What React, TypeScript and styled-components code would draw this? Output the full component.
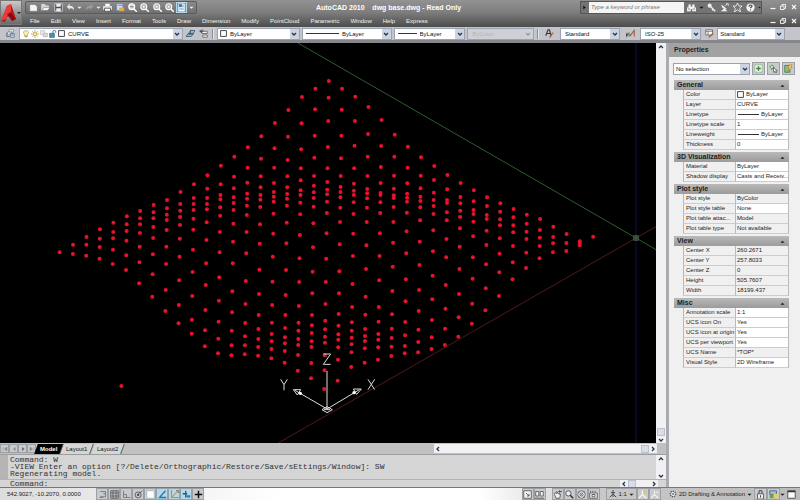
import React from "react";
import styled, { createGlobalStyle } from "styled-components";

const Global = createGlobalStyle`
  * { box-sizing: border-box; }
  html, body, #root { height: 100%; }
  body { margin: 0; overflow: hidden; background: #a5a8ae; font: 6px/10px "Liberation Sans", Arial, sans-serif; color: #1c1c1c; }
  button, input, select { font: inherit; color: inherit; margin: 0; padding: 0; border: 0; background: none; border-radius: 0; outline: none; }
`;

/* ---------- icons ---------- */

const art: Record<string, React.ReactNode> = {
  newFile: <path d="M1 2h7l3 3v6H1z" fill="#f4f4f4" stroke="#555" strokeWidth=".5" />,
  open: <><path d="M1 10V2h4l1 2h4v2" fill="#cfcfcf" stroke="#eee" /><path d="M1 10l3-4h8l-3 4z" fill="#f2f2f2" stroke="#555" strokeWidth=".5" /></>,
  save: <><path d="M1 1h10v10H1z" fill="#46505e" stroke="#ddd" /><path d="M3 1h6v4H3zM3 7h6v4H3z" fill="#eee" /></>,
  undo: <path d="M1 5l4-4v3c5-1 6 3 5 6-1-3-2-3-5-3v2z" fill="#e4e8ee" />,
  redo: <path d="M11 5L7 1v3C2 3 1 7 2 10c1-3 2-3 5-3v2z" fill="#9b9b9b" />,
  print: <><path d="M3 1h6v4H3z" fill="#fff" /><path d="M0 4h12v5H0z" fill="#dcdcdc" /><path d="M2 7h8v4H2z" fill="#fff" stroke="#444" /></>,
  plot: <><path d="M1 1h8v9H1z" fill="#d9e4f3" stroke="#7189a8" /><path d="M4 6h7v5H4z" fill="#e6a54b" /><path d="M3 3h5" stroke="#4169a0" /></>,
  zoom: <><circle cx="5" cy="5" r="4" fill="#dedede" stroke="#fff" strokeWidth="1.4" /><path d="M8 8l4 4" stroke="#fff" strokeWidth="2" /><path d="M3 5h4" stroke="#444" /></>,
  zoomPlus: <><circle cx="5" cy="5" r="4" fill="#aaa" stroke="#fff" strokeWidth="1.4" /><path d="M8 8l4 4" stroke="#fff" strokeWidth="2" /><path d="M3 5h4M5 3v4" stroke="#fff" /></>,
  palette: <><path d="M1 0h10v12H1z" fill="#f5faff" stroke="#30679c" /><path d="M3 2h3v3H3zM3 8h6" fill="#356fa8" stroke="#356fa8" /><path d="M8 2v4" stroke="#356fa8" /></>,
  layers: <><path d="M4 1h6v3H4zM2 4h6v3H2z" fill="#f5f7fa" stroke="#677788" strokeWidth=".8" /><path d="M6 6h5v5H6z" fill="#dce4ed" stroke="#567" /><path d="M1 5v5h4M7 8h3" stroke="#456" fill="none" /></>,
  bulb: <><path d="M6 1c-5 0-4 4-2 6v2h4V7c2-2 3-6-2-6z" fill="#fff3a0" stroke="#98832c" strokeWidth=".8" /><path d="M4 10h4" stroke="#555" /></>,
  sun: <><circle cx="6" cy="6" r="3" fill="#ffe98b" stroke="#a1822b" /><path d="M6 0v2M6 10v2M0 6h2M10 6h2M2 2l1 1M9 9l1 1M2 10l1-1M9 3l1-1" stroke="#a1822b" /></>,
  freeze: <><path d="M1 1h6v6H1z" fill="#eee" stroke="#b7b7b7" /><path d="M5 5h6v5H5z" fill="#ddd" stroke="#aaa" /></>,
  lock: <><path d="M1 5h7v6H1z" fill="#4e91ac" stroke="#286078" /><path d="M6 5V2c0-2 4-2 4 0v2" fill="none" stroke="#286078" strokeWidth="1.3" /></>,
  square: <path d="M1 1h10v10H1z" fill="#fff" stroke="#222" strokeWidth="1.4" />,
  layerBlue: <><path d="M3 7l3-5h6L9 7zM0 10l3-4h7l-3 4z" fill="#9bb9ce" stroke="#34526a" /><path d="M6 1v5" stroke="#34526a" /></>,
  layerPrev: <><path d="M4 3h7v3H4zM5 8h6v3H5z" fill="#f1f1f1" stroke="#555" /><path d="M5 1L1 3l3 2M1 3h5" fill="none" stroke="#333" /></>,
  textStyle: <><path d="M1 9l3-8h2l2 8M2 6h5" fill="none" stroke="#333" strokeWidth="1.4" /><path d="M6 11c2 0 1-3 5-6" stroke="#b3603b" strokeWidth="2" fill="none" /></>,
  dimStyle: <><path d="M0 8h7M1 5v6M0 8l5-3" stroke="#333" fill="none" /><path d="M4 10c2 0 3-4 7-8v8" stroke="#a5633d" strokeWidth="1.6" fill="none" /></>,
  tableStyle: <><path d="M1 1h9v7H1zM1 3h9M4 3v5" fill="#fff" stroke="#555" /><path d="M5 11c2 0 2-3 6-5" stroke="#b8652e" strokeWidth="2" fill="none" /></>,
  binoculars: <><path d="M2 2h3v4H2zM7 2h3v4H7zM0 6h5v5H0zM7 6h5v5H7zM5 5h2v3H5z" fill="#f6f6f6" /><path d="M1 8h3M8 8h3" stroke="#666" /></>,
  key: <><circle cx="3.5" cy="3.5" r="2.7" fill="#eee" /><path d="M5 5l6 6M8 8l-1 2" stroke="#eee" strokeWidth="2" /></>,
  dish: <><path d="M2 2c0 5 3 6 7 6zM1 11h9L6 7z" fill="#f2f2f2" /><path d="M6 4l4-3M8 1h3v3" stroke="#f2f2f2" fill="none" /></>,
  star: <path d="M6 0l2 4h4L9 7l1 5-4-3-4 3 1-5-3-3h4z" fill="#777" stroke="#fff" />,
  help: <><circle cx="6" cy="6" r="5.5" fill="#f5f5f5" /><path d="M4 5c0-3 4-3 4-1 0 2-2 1-2 3M6 8.500v1.400" fill="none" stroke="#444" strokeWidth="1.5" /></>,
  minimise: <path d="M1 9h10" stroke="#f5f5f5" strokeWidth="2.400" />,
  restore: <path d="M4 4V1h7v8H8M1 4h7v7H1z" fill="none" stroke="#f5f5f5" strokeWidth="1.8" />,
  close: <path d="M2 2l8 8M10 2l-8 8" stroke="#f5f5f5" strokeWidth="2.400" />,
  pick: <><path d="M1 1h10v10H1z" fill="#e3f1df" stroke="#80a67c" strokeDasharray="2 1" /><path d="M6 3v6M3 6h6" stroke="#3e8742" strokeWidth="1.8" /></>,
  select: <><path d="M1 4l3-3 3 3-3 3zM3 8l3-3 3 3" fill="#bfe0b8" stroke="#3e8345" /><path d="M6 5l5 4H9l1 3-1 .4L8 10l-2 1z" fill="#fff" stroke="#333" strokeWidth=".8" /></>,
  quick: <><path d="M1 2h7v9H1z" fill="#8fc185" stroke="#397340" /><path d="M8 0L5 5h2l-2 5 6-6H9l2-4z" fill="#ffd16b" stroke="#9d6b20" strokeWidth=".7" /></>,
  snap: <path d="M3 2h7v7H3M10 5H7M2 10h5" fill="none" stroke="#777" strokeWidth="1.2" />,
  grid: <path d="M1 1h10v10H1zM1 4h10M1 8h10M4 1v10M8 1v10" fill="none" stroke="#454545" />,
  ortho: <path d="M2 1v9h9M2 6h4v4" fill="none" stroke="#777" strokeWidth="1.2" />,
  polar: <><circle cx="5.500" cy="6.500" r="4" fill="none" stroke="#444" /><circle cx="5.500" cy="6.500" r="1.500" fill="#444" /><path d="M5 6l6-5" stroke="#444" /></>,
  osnap: <path d="M1 1h10v10H1z" fill="#fff" stroke="#aaa" />,
  angle: <path d="M10 1L2 10h9" fill="none" stroke="#2476ac" strokeWidth="1.800" />,
  ducs: <><path d="M2 0v10h10M2 10l7-7" fill="none" stroke="#c98c35" strokeWidth="1.400" /><path d="M8 1h3v3" fill="none" stroke="#444" /></>,
  dyn: <><path d="M5 1v9M1 5h6" stroke="#1d6189" strokeWidth="1.700" /><path d="M6 7h5v3H6z" fill="#2c7ca8" /></>,
  plus: <path d="M6 1v10M1 6h10" stroke="#111" strokeWidth="2" />,
  model: <path d="M1 1h10v10H1zM4 4l4 4M8 5v3H5" fill="#f5f5f5" stroke="#444" />,
  views: <path d="M1 2h4v6H1zM7 2h4v6H7zM0 11h12" fill="#f5f5f5" stroke="#444" />,
  pan: <><path d="M2 6c-2-2 2-3 3-1V2l2 3 3 1-1 5H4z" fill="#eee" stroke="#444" /><path d="M9 0v5M7 2h5" stroke="#444" /></>,
  lens: <><circle cx="4.500" cy="4.500" r="3.500" fill="#eee" stroke="#333" /><path d="M7 7l4 4" stroke="#333" strokeWidth="2" /></>,
  wheel: <><circle cx="6" cy="6" r="5" fill="#eee" stroke="#444" /><circle cx="6" cy="6" r="2" fill="none" stroke="#444" /><path d="M2 2l8 8M10 2l-8 8" stroke="#666" strokeWidth=".6" /></>,
  motion: <path d="M1 4h10v7H1zM2 1v2M5 1v2M8 1v2M4 6h4v3H4z" fill="#eee" stroke="#444" />,
  scale: <path d="M6 0v6M6 6l-5 5M6 6l5 5M3 4h6M4 9h4" fill="none" stroke="#3c3c3c" strokeWidth="1.300" />,
  scaleOn: <><path d="M6 1v5L1 11M6 6l5 5" fill="none" stroke="#f5f5f5" strokeWidth="1.700" /><path d="M8 1h3v3H8z" fill="#e4c053" /></>,
  scaleOff: <path d="M6 1v5L1 11M6 6l5 5M8 3h3" fill="none" stroke="#f0f0f0" strokeWidth="1.500" />,
  gear: <><circle cx="6" cy="6" r="4" fill="#eee" stroke="#555" strokeDasharray="2 1" strokeWidth="2" /><circle cx="6" cy="6" r="1.500" fill="#777" /></>,
  padlock: <><path d="M2 5h8v7H2z" fill="#eee" stroke="#444" /><path d="M4 5V1h4v4M6 7v3" fill="none" stroke="#444" strokeWidth="1.300" /></>,
  hardware: <><path d="M1 1h9v5H1z" fill="#91bce0" stroke="#456" /><path d="M1 6h9v5H1z" fill="#62a458" /><path d="M6 5h5v6H6z" fill="#edcc54" /></>,
  clean: <><path d="M1 1h10v10H1z" fill="#fafafa" stroke="#333" /><path d="M1 2h10" stroke="#333" strokeWidth="2" /></>,
  down: <path d="M2 4l4 4 4-4" fill="none" stroke="#26374c" strokeWidth="2.600" />,
  up: <path d="M2 8l4-4 4 4" fill="none" stroke="#26374c" strokeWidth="2.600" />,
  left: <path d="M8 2L4 6l4 4" fill="none" stroke="#26374c" strokeWidth="2.600" />,
  right: <path d="M4 2l4 4-4 4" fill="none" stroke="#26374c" strokeWidth="2.600" />,
  triDown: <path d="M1 4h10L6 9z" fill="currentColor" />,
  triUp: <path d="M1 9h10L6 4z" fill="currentColor" />,
  triRight: <path d="M3 1v10l6-5z" fill="currentColor" />,
  first: <path d="M2 2v8M10 2L5 6l5 4z" fill="#888" stroke="#888" />,
  prev: <path d="M9 2L4 6l5 4z" fill="#888" />,
  next: <path d="M4 2v8l5-4z" fill="#666" />,
  last: <path d="M10 2v8M2 2l5 4-5 4z" fill="#888" stroke="#888" />,
};

const Glyph = styled.svg<{ $size: number }>`
  display: block;
  flex: none;
  width: ${(p) => p.$size}px;
  height: ${(p) => p.$size}px;
`;
const Icon = ({ name, size = 9 }: { name: string; size?: number }) => (
  <Glyph $size={size} viewBox="0 0 12 12" aria-hidden="true">{art[name]}</Glyph>
);

/* ---------- frame ---------- */

const Shell = styled.div`
  display: flex;
  flex-direction: column;
  height: 100vh;
`;
const Header = styled.header`
  display: flex;
  height: 27px;
  flex: none;
  background: linear-gradient(#929292, #7e7e7e 45%, #4c4c4c);
  color: #f2f2f2;
`;
const AppButton = styled.button`
  display: flex;
  align-items: center;
  justify-content: center;
  width: 22px;
  height: 25px;
  border: 1px solid #777;
  background: linear-gradient(#c9c9c9, #6b6b6b);
`;
const HeaderRows = styled.div`
  display: flex;
  flex-direction: column;
  flex: 1;
`;
const TitleRow = styled.div`
  display: flex;
  align-items: center;
  height: 14px;
  padding-left: 3px;
`;
const QuickBar = styled.div`
  display: flex;
  align-items: center;
  width: 172px;
  height: 13px;
  padding: 0 2px;
  justify-content: space-between;
  border: 1px solid #5b5b5b;
  border-radius: 2px;
  background: linear-gradient(#8b8b8b, #6f6f6f);
`;
const IconButton = styled.button<{ $w?: number; $h?: number; $on?: boolean; $framed?: boolean }>`
  display: flex;
  align-items: center;
  justify-content: center;
  flex: none;
  width: ${(p) => p.$w ?? 11}px;
  height: ${(p) => p.$h ?? 11}px;
  background: ${(p) => (p.$on ? "#b5d8e8" : p.$framed ? "#c9cacd" : "transparent")};
  border: ${(p) => (p.$framed ? "1px solid #9b9fa6" : "0")};
`;
const Title = styled.h1`
  flex: 1;
  margin: 0;
  padding-top: 2px;
  text-align: center;
  font-size: 7px;
  line-height: 12px;
  white-space: pre;
  color: #fff;
`;
const SearchBar = styled.div`
  display: flex;
  align-items: center;
  width: 182px;
  height: 13px;
  gap: 2px;
  padding-left: 1px;
  border: 1px solid #555;
  background: #747474;
  color: #111;
`;
const SearchInput = styled.input`
  width: 100px;
  height: 11px;
  padding: 0 2px;
  background: #f5f5f5;
  font-style: italic;
  &::placeholder { color: #777; opacity: 1; }
`;
const WindowButtons = styled.div`
  display: flex;
  align-items: center;
  justify-content: space-between;
  width: 28px;
  margin: 0 3px 0 7px;
`;
const MenuRow = styled.div`
  display: flex;
  align-items: center;
  height: 13px;
`;
const Menus = styled.nav`
  display: flex;
  flex: 1;
  gap: 11px;
  padding-left: 8px;
`;
const MenuButton = styled.button`
  height: 12px;
  line-height: 12px;
`;

/* ---------- object toolbar ---------- */

const Toolbar = styled.div`
  display: flex;
  align-items: center;
  flex: none;
  height: 13px;
  gap: 2px;
  padding: 0 15px 0 4px;
  background: #c3c5cb;
`;
const Grip = styled.span`
  width: 2px;
  height: 10px;
  margin: 0 1px;
  border-left: 1px solid #8a8d95;
  background: #e6e7ea;
`;
const ComboBox = styled.label<{ $grow: number; $off?: boolean }>`
  display: flex;
  align-items: center;
  flex: ${(p) => p.$grow} 1 0;
  min-width: 0;
  height: 12px;
  gap: 1px;
  padding-left: 2px;
  border: 1px solid #9aa3b1;
  background: ${(p) => (p.$off ? "#cfd0d5" : "#fff")};
  color: ${(p) => (p.$off ? "#a9a9ae" : "#111")};
`;
const ComboSelect = styled.select<{ $inset?: number }>`
  flex: 1;
  min-width: 0;
  height: 10px;
  padding-left: ${(p) => p.$inset ?? 2}px;
  appearance: none;
`;
const ArrowBox = styled.span<{ $off?: boolean }>`
  display: flex;
  align-items: center;
  justify-content: center;
  width: 9px;
  height: 10px;
  background: #ccd4e2;
  opacity: ${(p) => (p.$off ? 0.35 : 1)};
`;
const Rule = styled.span<{ $w: number }>`
  flex: none;
  width: ${(p) => p.$w}px;
  height: 1px;
  margin-left: 1px;
  background: #333;
`;
type ComboProps = { label: string; value: string; grow: number; inset?: number; off?: boolean; children?: React.ReactNode };
const Combo = ({ label, value, grow, inset, off, children }: ComboProps) => (
  <ComboBox $grow={grow} $off={off}>
    {children}
    <ComboSelect aria-label={label} disabled={off} $inset={inset}><option>{value}</option></ComboSelect>
    <ArrowBox $off={off}><Icon name="down" size={6} /></ArrowBox>
  </ComboBox>
);

/* ---------- workspace ---------- */

const Workspace = styled.div`
  display: flex;
  flex: 1;
  min-height: 0;
  border-top: 3px solid #85878c;
`;
const Main = styled.main`
  display: flex;
  flex-direction: column;
  flex: 1;
  min-width: 0;
`;
const ViewRow = styled.div`
  display: flex;
  flex: 1;
  min-height: 0;
`;
const Viewport = styled.svg`
  flex: 1;
  min-width: 0;
  height: 100%;
  background: #000;
`;
const Scroll = styled.div<{ $across?: boolean }>`
  display: flex;
  flex-direction: ${(p) => (p.$across ? "row" : "column")};
  justify-content: space-between;
  align-items: center;
  flex: none;
  width: ${(p) => (p.$across ? "auto" : "10px")};
  background: #f1f1f4;
`;
const Thumb = styled.span`
  flex: none;
  width: 8px;
  height: 8px;
  border: 1px solid #bcc1cb;
  background: #dadde4;
`;
const PushEnd = styled.span`
  flex: 1;
`;
const TabRow = styled.div`
  display: flex;
  align-items: center;
  flex: none;
  height: 11px;
  background: #c1c1c1;
`;
const TabScroll = styled(Scroll)`
  flex: 1;
  height: 9px;
  margin: 0 9px 0 311px;
`;
const Tab = styled.button<{ $active?: boolean }>`
  height: 10px;
  line-height: 10px;
  padding: 0 4px;
  background: ${(p) => (p.$active ? "#000" : "#d5d5d5")};
  color: ${(p) => (p.$active ? "#fff" : "#111")};
  border-right: 1px solid #555;
  transform: skewX(-20deg);
`;
const TabText = styled.span<{ $strong?: boolean }>`
  display: block;
  font-weight: ${(p) => (p.$strong ? 700 : 400)};
  transform: skewX(20deg);
`;
const CommandPane = styled.section`
  flex: none;
  display: flex;
  flex-direction: column;
  height: 33px;
  border-top: 1px solid #9b9da1;
  background: #d5d5d5;
  font: 8px/7px "Liberation Mono", monospace;
  color: #333;
`;
const HistoryRow = styled.div`
  display: flex;
  height: 24px;
  border-left: 8px solid #b5b5b5;
`;
const History = styled.pre`
  flex: 1;
  margin: 0;
  padding: 1px 0 0 2px;
  font: inherit;
`;
const PromptRow = styled.label`
  display: flex;
  align-items: center;
  height: 8px;
  padding-left: 10px;
  border-top: 1px solid #b2b2b2;
`;
const PromptInput = styled.input`
  flex: 1;
  height: 7px;
`;
const PromptScroll = styled(Scroll)`
  width: 38px;
  height: 7px;
  margin-right: 8px;
`;

/* ---------- properties palette ---------- */

const Palette = styled.aside`
  flex: none;
  width: 134px;
  border-left: 3px solid #a9abb0;
  background: #f0f0f0;
`;
const PaletteTitle = styled.h2`
  margin: 0;
  height: 14px;
  padding-left: 5px;
  font-size: 7px;
  line-height: 14px;
  background: #a2a2a2;
  color: #222;
`;
const PaletteTools = styled.div`
  display: flex;
  align-items: center;
  gap: 2px;
  height: 23px;
  padding: 0 5px 0 4px;
`;
const Group = styled.table`
  width: 115px;
  margin: 0 0 2px 5px;
  border-collapse: separate;
  border-spacing: 0;
  table-layout: fixed;
`;
const GroupHead = styled.th`
  height: 10px;
  padding: 0;
  text-align: left;
  background: linear-gradient(#b9b9b9, #9b9b9b);
`;
const GroupToggle = styled.button`
  display: flex;
  align-items: center;
  justify-content: space-between;
  width: 100%;
  height: 10px;
  padding: 0 4px 0 3px;
  font-size: 7px;
  font-weight: 700;
  line-height: 10px;
`;
const Gutter = styled.td`
  width: 9px;
  padding: 0;
`;
const NameCell = styled.th`
  width: 52px;
  height: 10px;
  padding: 0 0 0 2px;
  overflow: hidden;
  white-space: nowrap;
  text-align: left;
  font-weight: 400;
  line-height: 9px;
  border-bottom: 1px solid #cdcdcd;
  border-left: 1px solid #b9b9b9;
`;
const ValueCell = styled.td<{ $locked?: boolean }>`
  height: 10px;
  padding: 0 0 0 1px;
  overflow: hidden;
  white-space: nowrap;
  line-height: 9px;
  border: solid #b9b9b9;
  border-width: 0 1px;
  border-bottom: 1px solid #cdcdcd;
  background: ${(p) => (p.$locked ? "#f0f0f0" : "#fff")};
`;
const Value = styled.span`
  display: flex;
  align-items: center;
  gap: 2px;
`;

type Prop = { name: string; value: string; mark?: "swatch" | "line"; locked?: boolean };
const p = (name: string, value: string, locked = false, mark?: Prop["mark"]): Prop => ({ name, value, locked, mark });
const groups: { title: string; rows: Prop[] }[] = [
  { title: "General", rows: [p("Color", "ByLayer", false, "swatch"), p("Layer", "CURVE"), p("Linetype", "ByLayer", false, "line"), p("Linetype scale", "1"), p("Lineweight", "ByLayer", false, "line"), p("Thickness", "0")] },
  { title: "3D Visualization", rows: [p("Material", "ByLayer"), p("Shadow display", "Casts and Receiv...")] },
  { title: "Plot style", rows: [p("Plot style", "ByColor", true), p("Plot style table", "None"), p("Plot table attac...", "Model", true), p("Plot table type", "Not available", true)] },
  { title: "View", rows: [p("Center X", "260.2671", true), p("Center Y", "257.8033", true), p("Center Z", "0", true), p("Height", "505.7607", true), p("Width", "18199.437", true)] },
  { title: "Misc", rows: [p("Annotation scale", "1:1"), p("UCS icon On", "Yes"), p("UCS icon at origin", "Yes"), p("UCS per viewport", "Yes"), p("UCS Name", "*TOP*", true), p("Visual Style", "2D Wireframe")] },
];

/* ---------- status bar ---------- */

const Status = styled.footer`
  display: flex;
  align-items: center;
  flex: none;
  height: 13px;
  gap: 6px;
  padding: 0 3px 0 7px;
  border-top: 1px solid #777;
  background: linear-gradient(90deg, #dcdcdc, #fff 35%, #fff 60%, #c8c8c8 75%, #bcbcbc);
`;
const Coordinates = styled.output`
  width: 83px;
  white-space: nowrap;
`;
const Cluster = styled.div`
  display: flex;
  align-items: center;
  height: 12px;
`;
const TextButton = styled.button<{ $framed?: boolean }>`
  display: flex;
  align-items: center;
  gap: 2px;
  height: 12px;
  padding: 0 2px;
  white-space: nowrap;
  border: ${(p) => (p.$framed ? "1px solid #9b9fa6" : "0")};
`;

/* ---------- point cloud ---------- */

// Node heights of each grid column, in thirds of a pixel, from the leftmost column on.
const columns: number[][] = [
  [547], [524, 552], [501, 524, 557], [478, 506, 531, 566], [458, 486, 505, 539, 582],
  [439, 463, 483, 512, 556, 600], [423, 445, 463, 489, 530, 577, 640],
  [405, 427, 445, 471, 504, 553, 613, 680], [390, 415, 434, 450, 480, 530, 582, 660, 723],
  [366, 402, 422, 441, 465, 506, 560, 631, 705, 760], [343, 384, 402, 420, 446, 479, 539, 606, 678, 749, 791],
  [316, 356, 384, 402, 418, 457, 510, 580, 645, 720, 781, 829],
  [287, 343, 375, 388, 412, 437, 486, 547, 622, 692, 755, 806, 850],
  [260, 320, 355, 382, 399, 420, 461, 515, 580, 664, 727, 782, 826, 856],
  [232, 293, 338, 371, 386, 407, 435, 486, 550, 633, 702, 759, 799, 826, 853],
  [199, 266, 319, 352, 375, 389, 411, 463, 521, 599, 672, 735, 777, 807, 831, 857],
  [159, 235, 293, 339, 366, 380, 395, 431, 491, 560, 635, 705, 758, 792, 814, 837, 865],
  [120, 200, 270, 319, 352, 372, 386, 407, 458, 520, 600, 675, 735, 774, 802, 820, 843, 878],
  [81, 160, 238, 295, 331, 361, 375, 398, 433, 495, 565, 636, 708, 758, 782, 807, 825, 855, 902],
  [56, 118, 197, 263, 318, 347, 367, 384, 410, 460, 532, 605, 670, 735, 766, 789, 814, 831, 879, 925],
  [33, 83, 153, 231, 295, 336, 359, 373, 395, 429, 490, 566, 636, 702, 752, 778, 800, 818, 856, 901, 957],
  [56, 119, 197, 265, 318, 351, 366, 382, 413, 456, 523, 604, 670, 732, 767, 793, 809, 832, 869, 932],
  [80, 153, 227, 295, 341, 362, 375, 397, 432, 491, 558, 642, 711, 757, 782, 803, 823, 847, 891],
  [111, 192, 260, 318, 357, 370, 385, 413, 456, 526, 597, 680, 734, 777, 798, 813, 835, 878],
  [150, 228, 291, 339, 369, 375, 397, 429, 490, 558, 631, 711, 755, 792, 809, 832, 869],
  [194, 260, 317, 356, 376, 384, 411, 456, 518, 590, 663, 733, 776, 804, 830, 858],
  [230, 293, 340, 371, 383, 395, 428, 484, 550, 628, 694, 756, 796, 828, 850],
  [262, 317, 355, 380, 393, 412, 451, 515, 585, 660, 723, 779, 816, 847],
  [288, 330, 368, 390, 408, 432, 481, 544, 617, 688, 750, 802, 837],
  [315, 358, 390, 399, 427, 451, 507, 562, 645, 716, 776, 825],
  [339, 381, 400, 422, 441, 475, 530, 597, 672, 742, 800],
  [361, 394, 420, 432, 455, 499, 562, 626, 701, 761], [382, 408, 435, 447, 482, 525, 583, 655, 721],
  [400, 425, 448, 466, 505, 551, 607, 678], [417, 442, 466, 487, 528, 577, 628],
  [434, 461, 485, 507, 548, 594], [447, 480, 503, 528, 565], [470, 501, 520, 547],
  [492, 519, 543], [514, 520, 526], [500],
];
const pointX = (column: number, y: number) => 187 + 40 * column - 0.015 * y;

const Drawing = () => (
  <Viewport viewBox="0 0 1968 1200" preserveAspectRatio="xMinYMin slice" role="img" aria-label="Model space">
    <path d="M894 0L1908 585L1968 620" fill="none" stroke="#2f5c30" strokeWidth="3" />
    <path d="M835 1200L1908 585L1968 551" fill="none" stroke="#501a16" strokeWidth="3" />
    <path d="M1908 0V1200" stroke="#10104c" strokeWidth="3" />
    <path d="M1901 578h14v14h-14zM1901 585h14M1908 578v14" fill="#1f331f" stroke="#5c7a5c" strokeWidth="2" />
    <g fill="#e8122a">
      {columns.flatMap((ys, c) => ys.map((y) => <circle key={`${c}-${y}`} cx={pointX(c, y)} cy={y + 81} r="6" />))}
      <circle cx="364" cy="1029" r="6" />
    </g>
    <g fill="none" stroke="#ddd" strokeWidth="3">
      <path d="M981 1098V984M981 1098L885 1042M981 1098L1078 1040" />
      <path d="M880 1040l22 0 -10 16zM1084 1038l-24 0 10 16zM966 1100l15-9 16 9-16 9zM972 1100h18" />
      <path d="M970 933h22l-22 31h22M842 1009l10 16 10-16M852 1025v17M1104 1009l20 31M1124 1009l-20 31" />
    </g>
    <g fill="#fff"><circle cx="901" cy="1051" r="5" /><circle cx="1062" cy="1049" r="5" /></g>
  </Viewport>
);

const Tools = ({ names, w, h, framed, on = [] }: { names: string[]; w?: number; h?: number; framed?: boolean; on?: string[] }) => (
  <>
    {names.map((n, i) => (
      <IconButton key={n + i} aria-label={n} $w={n.startsWith("tri") ? 5 : w} $h={h} $framed={framed} $on={on.includes(n)}>
        <Icon name={n} size={n.startsWith("tri") ? 5 : 9} />
      </IconButton>
    ))}
  </>
);
const WindowControls = () => (
  <WindowButtons>
    {["minimise", "restore", "close"].map((n) => <IconButton key={n} aria-label={n} $w={7}><Icon name={n} size={6} /></IconButton>)}
  </WindowButtons>
);
const ScrollButton = ({ name }: { name: string }) => (
  <IconButton aria-label={name} $w={8} $h={7}><Icon name={name} size={6} /></IconButton>
);

export default function App() {
  return (
    <Shell>
      <Global />
      <Header>
        <AppButton aria-label="Application menu">
          <Glyph $size={20} viewBox="0 0 20 20" aria-hidden="true">
            <path d="M0 18L6 3l4-2 5 15-4 2-2-5-3 1-2 5z" fill="#b91518" />
            <path d="M6 3L0 18l5-2 4-8 1 2V1z" fill="#ed3b3b" />
            <path d="M6 11l4-1 5 6-4 2z" fill="#8b090c" />
            <path d="M16 9h4l-2 2z" fill="#222" />
          </Glyph>
        </AppButton>
        <HeaderRows>
          <TitleRow>
            <QuickBar>
              <Tools names={["newFile", "open", "save", "undo", "triDown", "redo", "triDown", "print", "plot", "zoom", "zoomPlus", "zoomPlus", "zoomPlus", "palette", "triDown"]} on={["palette"]} />
            </QuickBar>
            <Title>AutoCAD 2010    dwg base.dwg - Read Only</Title>
            <SearchBar>
              <Icon name="triRight" size={5} />
              <SearchInput aria-label="Search" placeholder="Type a keyword or phrase" />
              <Tools names={["binoculars", "triDown", "key", "dish", "star", "help"]} />
              <Icon name="triDown" size={3} />
            </SearchBar>
            <WindowControls />
          </TitleRow>
          <MenuRow>
            <Menus>
              {["File", "Edit", "View", "Insert", "Format", "Tools", "Draw", "Dimension", "Modify", "PointCloud", "Parametric", "Window", "Help", "Express"].map((m) => <MenuButton key={m}>{m}</MenuButton>)}
            </Menus>
            <WindowControls />
          </MenuRow>
        </HeaderRows>
      </Header>

      <Toolbar>
        <Tools names={["layers"]} w={13} />
        <Combo label="Layer" value="CURVE" grow={168}>
          {["bulb", "sun", "freeze", "lock"].map((n) => <Icon key={n} name={n} size={8} />)}
          <Icon name="square" size={7} />
        </Combo>
        <Tools names={["layerBlue", "layerPrev"]} />
        <Grip />
        <Combo label="Color" value="ByLayer" grow={83}><Icon name="square" size={7} /></Combo>
        <Combo label="Linetype" value="ByLayer" grow={90}><Rule $w={33} /></Combo>
        <Combo label="Lineweight" value="ByLayer" grow={71}><Rule $w={19} /></Combo>
        <Combo label="Plot style" value="ByColor" grow={66} off />
        <Grip />
        <Tools names={["textStyle"]} w={16} />
        <Combo label="Text style" value="Standard" grow={59} inset={2} />
        <Tools names={["dimStyle"]} w={16} />
        <Combo label="Dimension style" value="ISO-25" grow={60} inset={2} />
        <Tools names={["tableStyle"]} w={12} />
        <Combo label="Table style" value="Standard" grow={67} inset={0} />
      </Toolbar>

      <Workspace>
        <Main>
          <ViewRow>
            <Drawing />
            <Scroll><ScrollButton name="up" /><PushEnd /><Thumb /><ScrollButton name="down" /></Scroll>
          </ViewRow>
          <TabRow>
            {["first", "prev", "next", "last"].map((n) => <IconButton key={n} aria-label={n} $w={9} $h={9} $framed><Icon name={n} size={6} /></IconButton>)}
            <Tab $active><TabText $strong>Model</TabText></Tab>
            <Tab><TabText>Layout1</TabText></Tab>
            <Tab><TabText>Layout2</TabText></Tab>
            <TabScroll $across><ScrollButton name="left" /><PushEnd /><Thumb /><ScrollButton name="right" /></TabScroll>
          </TabRow>
          <CommandPane>
            <HistoryRow>
              <History>{"Command: W\n-VIEW Enter an option [?/Delete/Orthographic/Restore/Save/sEttings/Window]: SW\nRegenerating model."}</History>
              <Scroll><ScrollButton name="up" /><ScrollButton name="down" /></Scroll>
            </HistoryRow>
            <PromptRow>
              Command:
              <PromptInput />
              <PromptScroll $across><ScrollButton name="left" /><Thumb /><PushEnd /><ScrollButton name="right" /></PromptScroll>
            </PromptRow>
          </CommandPane>
        </Main>
        <Palette>
          <PaletteTitle>Properties</PaletteTitle>
          <PaletteTools>
            <Combo label="Selection" value="No selection" grow={1} inset={0} />
            <Tools names={["pick", "select", "quick"]} w={13} h={13} framed />
          </PaletteTools>
          {groups.map((g) => (
            <Group key={g.title}>
              <colgroup><col width="9" /><col width="52" /><col /></colgroup>
              <thead><tr><GroupHead colSpan={3}><GroupToggle>{g.title}<Icon name="triUp" size={5} /></GroupToggle></GroupHead></tr></thead>
              <tbody>
                {g.rows.map((r) => (
                  <tr key={r.name}>
                    <Gutter />
                    <NameCell scope="row">{r.name}</NameCell>
                    <ValueCell $locked={r.locked}>
                      <Value>{r.mark === "swatch" && <Icon name="square" size={7} />}{r.mark === "line" && <Rule $w={21} />}{r.value}</Value>
                    </ValueCell>
                  </tr>
                ))}
              </tbody>
            </Group>
          ))}
        </Palette>
      </Workspace>

      <Status>
        <Coordinates>542.9027, -10.2070, 0.0000</Coordinates>
        <Cluster>
          <Tools names={["snap", "grid", "ortho", "polar", "osnap", "angle", "ducs", "dyn", "plus"]} w={12} h={12} framed on={["osnap", "angle", "ducs", "dyn"]} />
        </Cluster>
        <PushEnd />
        <Cluster><Tools names={["model", "views"]} w={12} h={12} framed /></Cluster>
        <Cluster><Tools names={["pan", "lens", "wheel", "motion"]} w={12} h={12} framed /></Cluster>
        <Cluster>
          <TextButton $framed><Icon name="scale" size={8} />1:1<Icon name="triDown" size={5} /></TextButton>
          <Tools names={["scaleOn", "scaleOff"]} w={12} h={12} framed />
        </Cluster>
        <Cluster>
          <TextButton><Icon name="gear" size={8} />2D Drafting &amp; Annotation<Icon name="triDown" size={5} /></TextButton>
          <Tools names={["padlock", "hardware"]} w={13} h={12} framed />
          <Tools names={["triDown"]} /><Tools names={["clean"]} w={12} />
        </Cluster>
      </Status>
    </Shell>
  );
}
